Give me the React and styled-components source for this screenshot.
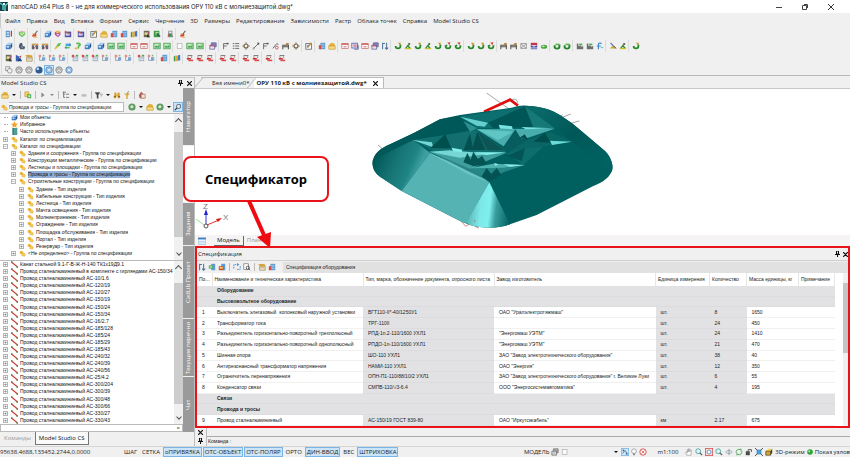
import React, { useState } from "react"
import styled, { createGlobalStyle, css } from "styled-components"

/* small toolbar drawings, all on a 10x10 field */
const glyphs = {
  table: (
    <>
      <rect x="1" y="1" width="5" height="8" fill="#4a90d0" />
      <path d="M2 3h3M2 5h3M2 7h3" stroke="#fff" />
      <path d="M8 1v7" stroke="#c33" strokeWidth="1.5" />
    </>
  ),
  shield: (
    <>
      <path d="M1 2l4 1 4-1v4L5 9 1 6z" fill="#6fc175" />
      <path d="M3 4l2 2 3-3" stroke="#e9f08a" strokeWidth="1.4" fill="none" />
      <path d="M2 2l3-1 3 1z" fill="#d66" />
    </>
  ),
  brush: (
    <>
      <path d="M8 1L5 5" stroke="#555" strokeWidth="1.3" />
      <path d="M1 8c2-4 4-4 6-2l-1 2z" fill="#d3452e" />
      <path d="M1 5l3-1 1 2z" fill="#e2a33a" />
      <path d="M3 9h5" stroke="#e2a33a" strokeWidth="1" />
    </>
  ),
  cube: (
    <>
      <path d="M1 4l3-3h5l-2 3z" fill="#a7cdf0" />
      <path d="M1 4h6v5H1z" fill="#3b7dc4" />
      <path d="M7 4l2-3v5L7 9z" fill="#23548c" />
      <path d="M2 5h3v2H2z" fill="#cfe4f7" />
    </>
  ),
  heart: (
    <>
      <path d="M1 2l3 2 4-2v4L5 9 1 6z" fill="#b04da0" />
      <path d="M2 1h5v3H3z" fill="#e8b54a" />
      <path d="M3 5h3v2H4z" fill="#e9d6f4" />
    </>
  ),
  screen: (
    <>
      <rect x="1" y="2" width="8" height="7" fill="#5551a8" />
      <rect x="2" y="4" width="5" height="3" fill="#d8d5f5" />
      <path d="M1 1l5 4" stroke="#d2643c" strokeWidth="1.3" />
    </>
  ),
  edit: (
    <>
      <rect x="1" y="2" width="7" height="7" fill="#fff" stroke="#666" />
      <path d="M3 7l5-6" stroke="#c58a2a" strokeWidth="1.7" />
      <path d="M2 4h3M2 6h2" stroke="#4a7cb5" />
    </>
  ),
  folder: (
    <>
      <path d="M1 4l3-3 4 1 1 3v4H1z" fill="#e4b23c" />
      <path d="M1 5h8v4H1z" fill="#f6d983" stroke="#b98a24" strokeWidth=".6" />
    </>
  ),
  chart: (
    <>
      <rect x="3" y="1" width="6" height="8" fill="#5b9bd5" />
      <path d="M4 3h4M4 5h4M4 7h4" stroke="#b9d6f0" strokeWidth=".8" />
      <path d="M1 4h3v5H1z" fill="#d24c43" />
    </>
  ),
  books: (
    <>
      <path d="M1 3l2-1v7H1z" fill="#3f9c4d" />
      <path d="M3 2h3v7H3z" fill="#f0a52c" />
      <path d="M6 2l3-1v7H6z" fill="#3a7cc5" />
    </>
  ),
  photo: (
    <>
      <rect x="1" y="1" width="7" height="8" fill="#6b6a4e" />
      <path d="M2 3h4v3H2z" fill="#e9dc9a" />
      <path d="M5 5l4 4H5z" fill="#333" />
      <path d="M6 2h2v2H6z" fill="#bb4fa8" />
    </>
  ),
  greenbook: (
    <>
      <rect x="1" y="1" width="7" height="8" fill="#3d9b46" />
      <path d="M3 3h4M3 5h2" stroke="#dff3c8" />
      <path d="M5 5l4 3" stroke="#345" strokeWidth="1.5" />
    </>
  ),
  addbook: (
    <>
      <path d="M1 1h5v6H1z" fill="#f0cf5c" stroke="#b58a24" strokeWidth=".6" />
      <path d="M4 4h5v5H4z" fill="#4fae55" />
      <path d="M5 6.500h3M6.500 5v3" stroke="#fff" strokeWidth=".8" />
    </>
  ),
  flask: (
    <>
      <path d="M3 1h5v4l1 4H2z" fill="#8a8f98" />
      <path d="M3 5h2v3H3z" fill="#d2483d" />
      <path d="M5 5h2v3H5z" fill="#3aa04d" />
      <path d="M4 2h3v2H4z" fill="#eee" />
    </>
  ),
  bell: (
    <>
      <path d="M2 2l3-1 1 4 3 1-1 3H3L1 6z" fill="#4e5c6e" />
      <path d="M4 5l2 1-1 2z" fill="#9fb9d8" />
    </>
  ),
  crowd: (
    <>
      <path d="M1 2h8v2H1z" fill="#c9a14c" />
      <path d="M1 4h3v5H1zM6 4h3v5H6z" fill="#5b6472" />
      <path d="M3 9l4-5" stroke="#c44" />
    </>
  ),
  pen: (
    <>
      <path d="M1 8l4-6 4-1-2 4z" fill="#5cbf45" />
      <path d="M1 9l4-4" stroke="#e5c62f" strokeWidth="1.6" />
    </>
  ),
  swap: (
    <>
      <path d="M2 2h6v3H2z" fill="#46a8d8" />
      <path d="M1 6h6v2H1z" fill="#5cc24f" />
      <path d="M7 1l2 3-2 2zM3 5L1 7l2 2z" fill="#3b87ba" />
    </>
  ),
  hook: (
    <>
      <path d="M3 2c5-1 6 2 3 3l-1 3" stroke="#5bb74b" strokeWidth="2" fill="none" />
      <path d="M1 7h3v2H1z" fill="#e2b33b" />
    </>
  ),
  picture: (
    <>
      <rect x="1" y="1.5" width="8" height="7" fill="#b7e3a3" stroke="#48a05b" />
      <path d="M2 7l2-3 2 2 2-3v4z" fill="#379b62" />
      <path d="M3 3h2v1H3z" fill="#fff" />
    </>
  ),
  redwin: (
    <>
      <rect x="1" y="2" width="8" height="6" fill="#fff" stroke="#c77a76" />
      <path d="M1 2h8v1.500H1z" fill="#c9544d" />
      <path d="M3 6h4" stroke="#a55" />
    </>
  ),
  bluewin: (
    <>
      <rect x="1" y="1.5" width="7" height="6" fill="#f4e4ec" stroke="#4a62a8" />
      <path d="M3 3h4v3H3z" fill="#d08a9c" />
      <path d="M4 9h5V4" stroke="#445a9c" fill="none" />
    </>
  ),
  snap: (
    <>
      <rect x="0.500" y="0.500" width="9" height="9" fill="#d5e8f8" stroke="#7ab5e5" />
      <path d="M2 7l3-4 3 5" stroke="#3f6da0" fill="none" />
      <path d="M2 2h2v2H2zM6 6h2v2H6z" fill="#3f6da0" />
    </>
  ),
  stack: (
    <>
      <path d="M3 1h6v5H3z" fill="#8c84c4" stroke="#444f8a" strokeWidth=".8" />
      <path d="M1 4h6v5H1z" fill="#e6dff4" stroke="#444f8a" strokeWidth=".8" />
      <path d="M1 4h6v1.500H1z" fill="#b95563" />
    </>
  ),
  greystack: (
    <>
      <path d="M3 1h6v5H3z" fill="#aaa" stroke="#666" strokeWidth=".8" />
      <path d="M1 4h6v5H1z" fill="#ccc" stroke="#666" strokeWidth=".8" />
    </>
  ),
  blank: <rect x="1.500" y="2" width="6" height="6" fill="#fafafa" stroke="#aaa" strokeWidth=".8" />,
  node: (
    <>
      <path d="M2 9V2h6M2 5h4" stroke="#6d6d6d" strokeWidth="1.200" fill="none" />
      <path d="M6 1h2v2H6z" fill="#4b4b4b" />
    </>
  ),
  lines: (
    <path d="M1 2h2M4 2h5M1 5h2M4 5h5M1 8h2M4 8h5" stroke="#6b6b6b" strokeWidth="1.200" />
  ),
  gear: (
    <>
      <circle cx="5" cy="5" r="2.500" fill="none" stroke="#726249" strokeWidth="1.400" />
      <path d="M5 0v3M5 7v3M0 5h3M7 5h3" stroke="#927d5b" />
    </>
  ),
  slope: (
    <>
      <path d="M1 9l7-7" stroke="#6b6b6b" strokeWidth="1.200" />
      <path d="M6 1h3v3z" fill="#444" />
      <path d="M1 6v3h3z" fill="#999" />
    </>
  ),
  mark: (
    <>
      <path d="M1 8l5-6 2 1" stroke="#6b6b6b" strokeWidth="1.200" fill="none" />
      <circle cx="6" cy="7" r="1.800" fill="none" stroke="#c44" />
    </>
  ),
  greenj: (
    <>
      <path d="M8 3v2c0 4-6 4-6 0" stroke="#278a29" strokeWidth="2.200" fill="none" />
      <path d="M5 1l4 0-2 3z" fill="#c79a2c" />
    </>
  ),
  greenr: (
    <>
      <path d="M8 4v1c0 4-6 4-6 0l2-1" stroke="#278a29" strokeWidth="2.200" fill="none" />
      <path d="M4 1l4-1-1 4z" fill="#d55045" />
    </>
  ),
  greenx: (
    <>
      <path d="M2 8l5-6M4 4l4 4" stroke="#3b8b2c" strokeWidth="1.700" />
      <path d="M1 7.500h8V9H1z" fill="#c7c32c" />
      <path d="M5 1l3 1-1 2z" fill="#555" />
    </>
  ),
  gate: (
    <>
      <path d="M1 9V4h7v5M1 6h7" stroke="#55524c" strokeWidth="1.300" fill="none" />
      <path d="M4 4l2-3 3 1-2 3z" fill="#a9824b" />
    </>
  ),
  mesh: (
    <path d="M1 2l7 6M8 2L1 8M1 2h7v6H1z" stroke="#868686" strokeWidth=".9" fill="none" />
  ),
  redblue: (
    <>
      <path d="M1 1h8v3H1z" fill="#c2334d" />
      <path d="M1 4l4 2 4-2v3H1z" fill="#3c48a8" />
      <path d="M1 8h8v1H1z" fill="#3c48a8" />
    </>
  ),
  hill: (
    <>
      <path d="M1 1l4 2v6H1z" fill="#3c62b8" />
      <path d="M3 9l3-5 3 5z" fill="#27407c" />
      <path d="M5 3l3-1-1 3z" fill="#c2452d" />
    </>
  ),
  pond: (
    <>
      <ellipse cx="5" cy="6" rx="4" ry="2.500" fill="#49a63c" />
      <ellipse cx="4" cy="5.500" rx="2" ry="1" fill="#b8e2a7" />
    </>
  ),
  ring: (
    <>
      <path d="M2 4v2c0 3 6 3 6 0V3" stroke="#22852a" strokeWidth="2.400" fill="none" />
      <path d="M3 2h5v2H3z" fill="#5fb64c" />
    </>
  ),
  factory: (
    <>
      <path d="M1 9V2h2v3l3-1v2l3-1v4z" fill="#6b716c" />
      <path d="M4 2h4v2H4z" fill="#4faf57" />
    </>
  ),
  bluef: (
    <>
      <path d="M3 9V3c0-2 3-2 4-1M1 5h5" stroke="#3f8fd0" strokeWidth="1.500" fill="none" />
      <path d="M6 7h3" stroke="#4ab0a0" />
    </>
  ),
  cross: (
    <>
      <path d="M2 1l6 7" stroke="#4b77b9" strokeWidth="1.500" />
      <path d="M1 8l3-3 5 3z" fill="#c4b428" />
      <path d="M6 5l3 3" stroke="#a33" />
    </>
  ),
  redtree: (
    <>
      <path d="M2 2v6h6" stroke="#7f95ad" fill="none" />
      <path d="M1 1h3v3H1z" fill="#e08b85" />
      <path d="M5 4h4v4H5z" fill="#7ba6d0" />
      <path d="M6 1h2v2H6z" fill="#7cb884" />
    </>
  ),
  tablered: (
    <>
      <path d="M2 3h7v6H2z" fill="#a9b7c8" />
      <path d="M3 5h5M3 7h5" stroke="#fff" strokeWidth=".8" />
      <path d="M1 1h3v3H1z" fill="#d4504e" />
      <path d="M6 1h3v2H6z" fill="#53a560" />
    </>
  ),
  pdf: (
    <>
      <path d="M2 2h6" stroke="#777" strokeWidth="1.300" />
      <path d="M2 3l1 2M7 3v2" stroke="#a66" />
      <path d="M1 5h5v2H1z" fill="#cf2a2e" />
      <path d="M3 7h6v2H3z" fill="#dd4a4c" />
    </>
  ),
  copy: (
    <>
      <rect x="1" y="1" width="5" height="5" fill="none" stroke="#777" strokeWidth=".8" />
      <circle cx="6" cy="6" r="3" fill="#eee" stroke="#777" strokeWidth=".8" />
    </>
  ),
  sphere: (
    <>
      <circle cx="5" cy="5" r="4" fill="#e8e8e8" stroke="#777" />
      <circle cx="5" cy="5" r="2" fill="none" stroke="#999" strokeWidth=".8" />
      <path d="M1 4h8M5 1v2" stroke="#888" strokeWidth=".5" />
    </>
  ),
  ball: (
    <>
      <circle cx="5" cy="5" r="4.500" fill="#2c5c92" />
      <circle cx="3.500" cy="3.500" r="1.700" fill="#c4ddf5" />
    </>
  ),
  bluesphere: (
    <>
      <circle cx="5" cy="5" r="4" fill="#a9cbee" stroke="#4c7fae" />
      <circle cx="5" cy="5" r="2" fill="#e2effb" stroke="#7ba7cf" strokeWidth=".6" />
    </>
  ),
  play: <path d="M3 2l4 3-4 3z" fill="#888" />,
  tree: <path d="M2 1v7h2M2 4h2M5 4h4M5 8h4M1 1.500h4" stroke="#666" fill="none" />,
  minus: <path d="M2 4h6v3H2z" fill="#bbb" />,
  funnel: <path d="M0 2h6L4 5v4H2.500V5zM6 4h4M7 6h2" fill="#444" stroke="#555" strokeWidth=".6" />,
  binocular: (
    <>
      <path d="M1 9l1-7h2l.5 3h1L6 2h2l1 7H6V6H4v3z" fill="#d39b2c" />
      <path d="M1 7h3M6 7h3" stroke="#7b5413" />
    </>
  ),
  goldfunnel: (
    <>
      <path d="M1 3h8L6 6v4H4V6z" fill="#e0b23d" />
      <path d="M7 0L5 4" stroke="#777" />
    </>
  ),
  home: (
    <>
      <path d="M1 5l3-4 4 4v4H2z" fill="#b65b5b" />
      <path d="M4 4h5v5H4z" fill="#f1e7d0" stroke="#a4615f" strokeWidth=".8" />
    </>
  ),
  green: (
    <>
      <circle cx="5" cy="5" r="4.500" fill="#5f9a62" />
      <path d="M3 4c1-2 4-1 4 1L5 7 3 6" fill="#d7edc8" />
    </>
  ),
  wrench: (
    <>
      <path d="M1 9l4-4" stroke="#333" strokeWidth="1.500" />
      <path d="M4 2h4v4l-3 1-2-2z" fill="#e8f2fa" stroke="#456" />
    </>
  ),
  star: <path d="M5 0l1.500 3.500L10 4 7.500 6.300 8 10 5 8 2 10l.5-3.700L0 4l3.500-.5z" fill="#efa32d" />,
  item: (
    <>
      <path d="M1 2l3-1 2 2-1 3-4-1z" fill="#eeb52c" />
      <path d="M4 5l3-1 2 2-1 3-4-1z" fill="#f5cf59" stroke="#c48e20" strokeWidth=".5" />
    </>
  ),
  wire: (
    <>
      <path d="M0 1l10 8" stroke="#d1342f" strokeWidth="1.600" />
      <path d="M0 0l3 2M7 8l3 2" stroke="#588b49" strokeWidth="1.200" />
    </>
  ),
  notebook: (
    <>
      <rect x="2" y="0" width="7" height="10" fill="#4f9c98" />
      <path d="M3 0v10" stroke="#25615e" />
    </>
  ),
  sheet: (
    <>
      <rect x="0" y="1" width="10" height="8" fill="#e8f1fa" stroke="#8ba9c6" strokeWidth=".8" />
      <path d="M0 2h10" stroke="#3a7fc4" strokeWidth="2" />
      <path d="M0 6h10" stroke="#a9c4de" />
    </>
  ),
  sort: <path d="M2 1v8M7 1v8M5 2h-3M9 7L7 9 5 7" stroke="#52749b" strokeWidth="1.300" fill="none" />,
  sheetgreen: (
    <>
      <rect x="4" y="1" width="5" height="8" fill="#5b9bd5" />
      <path d="M1 3h5v4H1z" fill="#4fae55" />
      <path d="M2 5h3" stroke="#fff" />
    </>
  ),
  sheetgold: (
    <>
      <rect x="4" y="1" width="5" height="8" fill="#5b9bd5" />
      <path d="M1 4h6v5H1z" fill="#c9542c" />
      <path d="M2 5h4v2H2z" fill="#f3cf68" />
    </>
  ),
  arrows: (
    <>
      <path d="M1 7V2h4M9 4v4H4" stroke="#4a8fd0" strokeWidth="1.200" strokeDasharray="2 1" fill="none" />
      <path d="M5 0l3 2-3 2z" fill="#4a8fd0" />
    </>
  ),
  find: (
    <>
      <rect x="1" y="1" width="6" height="7" fill="#fff" stroke="#666" strokeWidth=".8" />
      <circle cx="6" cy="6" r="2" fill="none" stroke="#444" />
      <path d="M7 7l2 2" stroke="#444" />
    </>
  ),
  props: (
    <>
      <path d="M2 4h7v5H2z" fill="#f6e9c0" stroke="#8f8050" strokeWidth=".8" />
      <path d="M0 2l4-1 5 1v2H3z" fill="#d79f35" />
      <path d="M3 6h5" stroke="#999" />
    </>
  ),
  bulb: (
    <>
      <circle cx="5" cy="4" r="3" fill="#fafafa" stroke="#999" />
      <path d="M4 8h2" stroke="#777" strokeWidth="2" />
    </>
  ),
  target: (
    <>
      <circle cx="5" cy="5" r="4" fill="#fff" stroke="#d95454" strokeWidth="1.200" />
      <path d="M3 3l4 4M7 3L3 7" stroke="#d95454" />
    </>
  ),
  hand: <path d="M2 9L1 5l1-.5L3 6V2l1-.5V5l.5-4h1L6 5l1-3 1 .5L7.500 9z" fill="#fff" stroke="#777" strokeWidth=".6" />,
  lens: (
    <>
      <circle cx="4" cy="4" r="3" fill="#e4f6f4" stroke="#3e98a0" />
      <path d="M6 6l3 3" stroke="#555" strokeWidth="1.400" />
    </>
  ),
  lensred: (
    <>
      <rect x="0.500" y="0.500" width="9" height="9" fill="#f6dede" stroke="#d95454" />
      <circle cx="5" cy="5" r="2.500" fill="#fff" stroke="#4a86c0" />
    </>
  ),
  orbit: (
    <>
      <ellipse cx="5" cy="5" rx="4" ry="1.800" fill="none" stroke="#7893ad" strokeWidth=".8" />
      <path d="M5 1v8" stroke="#777" strokeWidth=".8" />
    </>
  ),
  recycle: <path d="M1.500 6a3.500 3.500 0 0 1 5-4l1-1v3M8.500 4a3.500 3.500 0 0 1-5 4l-1 1V6" stroke="#3f9f4a" fill="none" strokeWidth="1.100" />,
  lock: (
    <>
      <path d="M1 4h5v5H1z" fill="#4a4a4a" />
      <path d="M4 4V2h4v3" stroke="#555" strokeWidth="1.200" fill="none" />
    </>
  ),
  frame: (
    <>
      <rect x="2" y="2" width="6" height="6" fill="#4b9bd8" />
      <path d="M0 0l3 3M10 0L7 3M0 10l3-3M10 10L7 7" stroke="#333" />
    </>
  ),
  box3d: (
    <>
      <path d="M1 4l3-3h5L7 4z" fill="#f3d060" />
      <path d="M1 4h6v5H1z" fill="#dba52a" stroke="#333" strokeWidth=".8" />
      <path d="M7 4l2-3v5L7 9z" fill="#4a3a12" />
    </>
  ),
  dot: (
    <>
      <circle cx="5" cy="5" r="3.500" fill="#2fa437" />
      <circle cx="4" cy="4" r="1.200" fill="#b5edb0" />
    </>
  ),
}

const Glyph = ({ name, size = 8 }) => (
  <svg width={size} height={size} viewBox="0 0 10 10" aria-hidden="true">
    {glyphs[name]}
  </svg>
)

/* toolbars: groups are split by "|" */
const standardBars = [
  "table|shield|brush|cube heart screen|screen|edit folder chart chart books|photo greenbook|flask|brush",
  "cube|bell|crowd crowd|pen swap hook cube|cube picture picture|redwin redwin|picture picture|blank picture picture|stack|node lines gear slope node mark gate gear|edit|chart folder|redwin bluewin redwin stack sort|greenj greenx greenj greenx greenj greenr greenr|greenj greenj greenr|gate gate mesh redblue pond|ring ring|factory factory bluef|cross greenx|greenj",
  "photo hill props|redtree redtree redtree|tablered tablered tablered redtree|redtree redtree|tablered redtree|chart|books|pdf pdf pdf|pdf pdf|pdf pdf|pdf|pdf",
  "copy sphere sphere ball bluesphere sphere bluesphere",
].map(row => row.split("|").map(group => group.split(" ")))

const menuItems = [
  "Файл",
  "Правка",
  "Вид",
  "Вставка",
  "Формат",
  "Сервис",
  "Черчение",
  "3D",
  "Размеры",
  "Редактирование",
  "Зависимости",
  "Растр",
  "Облака точек",
  "Справка",
  "Model Studio CS",
]

const catalog = [
  { text: "Мои объекты", icon: "cube", level: 0, leaf: true },
  { text: "Избранное", icon: "star", level: 0, leaf: true },
  { text: "Часто используемые объекты", icon: "notebook", level: 0, leaf: true },
  { text: "Каталог по специализации", level: 0 },
  { text: "Каталог по спецификации", level: 0, open: true },
  { text: "Здания и сооружения - Группа по спецификации", level: 1 },
  { text: "Конструкции металлические - Группа по спецификации", level: 1 },
  { text: "Лестницы и площадки - Группа по спецификации", level: 1 },
  { text: "Провода и тросы - Группа по спецификации", level: 1, selected: true },
  { text: "Строительные конструкции - Группа по спецификации", level: 1, open: true },
  { text: "Здание - Тип изделия", level: 2 },
  { text: "Кабельные конструкции - Тип изделия", level: 2 },
  { text: "Лестница - Тип изделия", level: 2 },
  { text: "Мачта освещения - Тип изделия", level: 2 },
  { text: "Молниеприемник - Тип изделия", level: 2 },
  { text: "Ограждение - Тип изделия", level: 2 },
  { text: "Площадка обслуживания - Тип изделия", level: 2 },
  { text: "Портал - Тип изделия", level: 2 },
  { text: "Резервуар - Тип изделия", level: 2 },
  { text: "<Не определено> - Группа по спецификации", level: 1 },
]

const wires = [
  "Канат стальной 9.1-Г-В-Ж-Н-140 ТК1х19Д9.1",
  "Провод сталеалюминиевый в комплекте с гирляндами АС-150/34",
  ...[
    "10/1.6",
    "120/19",
    "120/27",
    "150/19",
    "150/24",
    "150/34",
    "16/2.7",
    "185/128",
    "185/24",
    "185/29",
    "185/43",
    "240/32",
    "240/39",
    "240/56",
    "25/4.2",
    "300/204",
    "300/39",
    "300/48",
    "300/66",
    "330/27",
    "330/43",
  ].map(size => `Провод сталеалюминиевый АС-${size}`),
]

const sideTabs = [
  { text: "Навигатор", share: 57 },
  { text: "Я..", share: 56, active: true },
  { text: "Задания", share: 42 },
  { text: "CadLib Проект", share: 72 },
  { text: "Текущие перечни", share: 57 },
  { text: "Чат", share: 55 },
]

const columns = [
  "По...",
  "Наименование и техническая характеристика",
  "Тип, марка, обозначение документа, опросного листа",
  "Завод изготовитель",
  "Единица измерения",
  "Количество",
  "Масса единицы, кг",
  "Примечание",
]

const specRows = [
  { group: "Оборудование" },
  { group: "Высоковольтное оборудование" },
  { cells: ["1", "Выключатель элегазовый  колонковый наружной установки", "ВГТ110-II*-40/1250У1", "ОАО \"Уралэлектротяжмаш\"", "шт.", "8", "1650"] },
  { cells: ["2", "Трансформатор тока", "ТРГ-110II", "", "шт.", "24", "450"] },
  { cells: ["3", "Разъединитель горизонтально-поворотный трехполюсный", "РПД-1п.2-110/1600 УХЛ1", "\"Энергомаш УЭТМ\"", "шт.", "24", "1410"] },
  { cells: ["4", "Разъединитель горизонтально-поворотный однополюсный", "РПДО-1п-110/1600 УХЛ1", "\"Энергомаш УЭТМ\"", "шт.", "21", "470"] },
  { cells: ["5", "Шинная опора", "ШО-110 УХЛ1", "ЗАО \"Завод электротехнического оборудования\"", "шт.", "38", "40"] },
  { cells: ["6", "Антирезонансный трансформатор напряжения", "НАМИ-110 УХЛ1", "ОАО \"Энергия\"", "шт.", "12", "350"] },
  { cells: ["7", "Ограничитель перенапряжения", "ОПН-П1-110/88/10/2 УХЛ1", "ЗАО \"Завод электротехнического оборудования\" г. Великие Луки", "шт.", "6", "55"] },
  { cells: ["8", "Конденсатор связи", "СМПВ-110/√3-6.4", "ООО \"Энергосистемавтоматика\"", "шт.", "4", "195"] },
  { group: "Связи" },
  { group: "Провода и тросы" },
  { cells: ["9", "Провод сталеалюминиевый", "АС-150/19 ГОСТ 839-80", "ОАО \"Иркутсккабель\"", "км", "2.17", "675"] },
]

const Scene = () => (
  <SceneSvg viewBox="0 0 655 146" preserveAspectRatio="xMinYMin meet">
    <defs>
      <linearGradient id="cone" gradientUnits="userSpaceOnUse" x1="318" y1="400" x2="450" y2="415">
        <stop offset="0" stopColor="#55b3b3" />
        <stop offset=".3" stopColor="#7de8e8" />
        <stop offset=".5" stopColor="#7ff0ee" />
        <stop offset=".65" stopColor="#3a9d9d" />
        <stop offset="1" stopColor="#006060" />
      </linearGradient>
      <linearGradient id="left" gradientUnits="userSpaceOnUse" x1="50" y1="225" x2="165" y2="275">
        <stop offset="0" stopColor="#005a5a" />
        <stop offset=".35" stopColor="#147070" />
        <stop offset=".8" stopColor="#1f8484" />
        <stop offset="1" stopColor="#3f9f9f" />
      </linearGradient>
      <linearGradient id="right" gradientUnits="userSpaceOnUse" x1="520" y1="80" x2="720" y2="260">
        <stop offset="0" stopColor="#0a6969" />
        <stop offset=".5" stopColor="#005858" />
        <stop offset="1" stopColor="#006262" />
      </linearGradient>
    </defs>
    <g transform="translate(165 -4) scale(.33333)">
      <path d="M380 24l70 50M600 100l32-13M620 118l38-10M590 105l18-16M54 180l14 12" stroke="#777" strokeWidth="2" fill="none" />
      <path d="M372 80l78-36 24 18" stroke="#e01010" strokeWidth="8" fill="none" />
      <path d="M455 45q15-8 18 8" stroke="#777" strokeWidth="2" fill="none" />
      <path
        d="M38 232C40 205 62 190 90 178L160 145 240 103 300 90 455 68Q480 60 500 62C560 65 590 82 610 97L640 118 735 198C755 218 762 245 755 260 745 280 730 290 700 303L530 390 450 418C420 430 370 432 330 420L300 408 125 318 60 275C42 262 36 245 38 232z"
        fill="#006060"
      />
      <path d="M495 62C560 65 590 82 610 97L640 118 735 198C755 218 762 245 755 260L635 170z" fill="url(#right)" />
      <path d="M160 145L240 103 300 92 330 135 160 165 40 225C45 205 62 190 90 178z" fill="#005858" />
      <path d="M160 165L210 203 125 318 60 275C42 262 36 245 38 225z" fill="url(#left)" />
      <path d="M210 203L388 292 318 415 300 408 125 318z" fill="#55b3b3" />
      <path d="M388 292L318 413 330 420C370 432 420 430 450 418z" fill="url(#cone)" />
      <path d="M300 95L495 64 584 130 352 130z" fill="#0d6f6f" />
      <path d="M384 113L495 64 520 127 400 130z" fill="#005656" />
      <path d="M495 64L584 130 520 127z" fill="#177878" />
      <path d="M160 165L350 135 440 200 230 203z" fill="#126f6f" />
      <path d="M310 108L352 130 330 140z" fill="#2d8f8f" />
      <path d="M300 95L384 113 374 125 350 122z" fill="#64cfcc" />
      <path d="M350 133L584 131 500 160 440 190z" fill="#4aadad" />
      <path d="M350 133L460 140 415 165z" fill="#5fc6c4" />
      <path d="M416 119l40 5 2 8-38-1zM484 126l100 4-86 3z" fill="#77e4e1" />
      <path d="M430 185l36-52 18 30 10-16 16 28-70 25z" fill="#075d5d" />
      <path d="M480 160l12-8 10 12" stroke="#034848" strokeWidth="4" fill="none" />
      <path d="M500 165L570 140 636 170 440 205z" fill="#0a6565" />
      <path d="M520 170l34-27 18 30z" fill="#004d4d" />
      <path d="M570 167l66 3-60 10z" fill="#6cdcda" />
      <path d="M158 165l58 7 3 15z" fill="#70d8d5" />
      <path d="M210 190l46-42 18 42z" fill="#004f4f" />
      <path d="M310 196l20-50 8 40 14-46 25 55z" fill="#064f50" />
      <path d="M352 138l80 58-50 0z" fill="#0d5454" />
      <path d="M208 200L440 203 380 228 330 255z" fill="#3f9f9f" />
      <path d="M208 200l60-4 120 10-90 12z" fill="#76d6d4" />
      <path d="M275 188l32 6-2 8-26-4zM340 202l100 0-60 8z" fill="#83eeea" />
      <path d="M310 232l12-28 10 20 8-24 14 22 12-10 15 24-40 8z" fill="#055353" />
      <path d="M440 205l60-15 50-5-60 55z" fill="#0d6d6d" />
      <path d="M440 212l55-22-10 38z" fill="#035454" />
      <path d="M330 250L494 240 430 262 388 292z" fill="#268787" />
      <path d="M330 250l70-14 94 4-65 8z" fill="#4eb2af" />
      <path d="M430 238l64 2-44 5zM402 234l14 4-10 4z" fill="#8af0ed" />
      <path d="M364 275l16-26 14 18 16-18 14 20-36 23z" fill="#045353" />
      <path d="M205 203l130 52 53 37-60-22z" fill="#69c5c3" />
      <path d="M215 203l118 50 50 34-55-27z" fill="#2a8383" />
      <path d="M305 410l12 14 10-6M344 405v6M345 424l12 5" stroke="#a55" strokeWidth="2" fill="none" />
    </g>
    <g fill="none" strokeWidth="1">
      <path d="M11 135V124" stroke="#3333e0" strokeWidth="1" />
      <path d="M11 120l2 6H9z" fill="#2222d8" />
      <path d="M12 136l12-5" stroke="#e03333" />
      <path d="M27 129l-6 1 2 3z" fill="#d81818" />
      <path d="M9 136l-8-6" stroke="#8fe08f" />
      <circle cx="11" cy="137" r="2" stroke="#555" />
    </g>
    <AxisName x="8" y="120">Z</AxisName>
    <AxisName x="28" y="131">X</AxisName>
  </SceneSvg>
)

const App = () => {
  const [spec, setSpec] = useState("Спецификация оборудования")
  const [group, setGroup] = useState("Провода и тросы - Группа по спецификации")
  const [command, setCommand] = useState("")

  return (
    <Page>
      <GlobalStyle />
      <TitleBar>
        <Logo width="8" height="9" viewBox="0 0 8 9">
          <path d="M0 0h8v9H0z" fill="#163f47" />
          <path d="M0 1l3 2v5M8 1L5 4v5" stroke="#5fd4c9" strokeWidth="1.400" fill="none" />
          <path d="M3 1h2v2H3z" fill="#e7f6f5" />
        </Logo>
        <Title>nanoCAD x64 Plus 8 - не для коммерческого использования ОРУ 110 кВ с молниезащитой.dwg*</Title>
        <WindowButton aria-label="Свернуть">
          <svg width="6" height="6"><path d="M0 3.500h6" stroke="#444" /></svg>
        </WindowButton>
        <WindowButton aria-label="Развернуть">
          <svg width="6" height="6"><path d="M.5 1.500h4v4h-4zM2 .5h3.500V4" stroke="#444" fill="none" /></svg>
        </WindowButton>
        <WindowButton aria-label="Закрыть">
          <svg width="6" height="6"><path d="M0 0l6 6M6 0L0 6" stroke="#333" /></svg>
        </WindowButton>
      </TitleBar>
      <MenuBar>
        {menuItems.map(item => (
          <MenuItem key={item}>{item}</MenuItem>
        ))}
      </MenuBar>
      <Toolbars>
        {standardBars.map((row, r) => (
          <ToolRow key={`bar_${r}`}>
            {row.map((icons, g) => (
              <ToolGroup key={`group_${g}`}>
                {icons.map((icon, i) => (
                  <ToolButton key={`tool_${i}`} aria-label={icon} $active={r === 3 && i === 4}>
                    <Glyph name={icon} />
                  </ToolButton>
                ))}
              </ToolGroup>
            ))}
          </ToolRow>
        ))}
      </Toolbars>

      <Workspace>
        <SidePanel>
          <PanelHead>
            <PanelTitle>Model Studio CS</PanelTitle>
            <Pin />
            <Cross />
          </PanelHead>
          <SideBody>
            <SideMain>
              <PanelTools>
                <ToolButton aria-label="Открыть"><Glyph name="folder" /></ToolButton>
                <Caret />
                <Divider />
                <ToolButton aria-label="Добавить"><Glyph name="addbook" /></ToolButton>
                <Divider />
                <ToolButton aria-label="Пуск"><Glyph name="play" /></ToolButton>
                <Caret $pale />
                <Divider />
                <ToolButton aria-label="Дерево"><Glyph name="tree" /></ToolButton>
                <Caret />
                <ToolButton aria-label="Скрыть"><Glyph name="minus" /></ToolButton>
                <Divider />
                <ToolButton aria-label="Фильтр"><Glyph name="funnel" /></ToolButton>
                <Caret />
                <ToolButton aria-label="Поиск"><Glyph name="binocular" /></ToolButton>
                <ToolButton aria-label="Отбор"><Glyph name="goldfunnel" /></ToolButton>
                <Divider />
                <ToolButton aria-label="Домой"><Glyph name="home" /></ToolButton>
              </PanelTools>
              <PathRow>
                <Glyph name="item" size={7} />
                <PathInput aria-label="Раздел" value={group} onChange={e => setGroup(e.target.value)} />
                <ToolButton aria-label="Назад"><Glyph name="green" /></ToolButton>
                <Caret />
                <ToolButton aria-label="Папка"><Glyph name="folder" /></ToolButton>
                <ToolButton aria-label="Вперед"><Glyph name="green" /></ToolButton>
                <Caret />
                <ToolButton aria-label="Настройка" $active><Glyph name="wrench" /></ToolButton>
              </PathRow>
              <TreeArea $share={147}>
                <Tree $bottom={3}>
                  {catalog.map(node => (
                    <TreeRow key={node.text} $level={node.level}>
                      {node.leaf ? <Branch /> : <Expander aria-label="Ветвь">{node.open ? "−" : "+"}</Expander>}
                      <Glyph name={node.icon || "item"} size={7} />
                      <TreeText $selected={node.selected}>{node.text}</TreeText>
                    </TreeRow>
                  ))}
                </Tree>
                <ScrollBar $top={8} $thumb={72}>
                  <ScrollDown />
                </ScrollBar>
              </TreeArea>
              <TreeArea $share={164}>
                <Tree $bottom={0}>
                  {wires.map(wire => (
                    <TreeRow key={wire} $level={0}>
                      <Expander aria-label="Ветвь">+</Expander>
                      <Glyph name="wire" size={7} />
                      <TreeText>{wire}</TreeText>
                    </TreeRow>
                  ))}
                </Tree>
                <ScrollBar $top={12} $thumb={74}>
                  <ScrollDown />
                </ScrollBar>
              </TreeArea>
              <BottomScroll>
                <span>×</span>
              </BottomScroll>
            </SideMain>
            <SideTabs>
              {sideTabs.map(tab => (
                <SideTab key={tab.text} $share={tab.share} $active={tab.active}>
                  {tab.text}
                </SideTab>
              ))}
            </SideTabs>
          </SideBody>
          <PanelTabs>
            <PanelTab>Команды</PanelTab>
            <PanelTab $active>Model Studio CS</PanelTab>
          </PanelTabs>
        </SidePanel>

        <Main>
          <DocTabs>
            <DocTab>Без имени0*</DocTab>
            <DocTab $active>
              ОРУ 110 кВ с молниезащитой.dwg*
              <Cross />
            </DocTab>
          </DocTabs>
          <Canvas>
            <Scene />
          </Canvas>
          <ModelTabs>
            <Glyph name="sheet" />
            <ModelTab $active>Модель</ModelTab>
            <ModelTab>План</ModelTab>
          </ModelTabs>

          <SpecPanel>
            <SpecHead>
              <PanelTitle>Спецификация</PanelTitle>
              <Pin />
              <Cross />
            </SpecHead>
            <SpecTools>
              {["sort", "sheetgreen", "sheetgold", "|", "arrows", "find", "|", "props", "chart"].map((icon, i) =>
                icon === "|" ? (
                  <Divider key={`spec_${i}`} />
                ) : (
                  <ToolButton key={`spec_${i}`} aria-label={icon}>
                    <Glyph name={icon} />
                  </ToolButton>
                )
              )}
              <SpecSelect aria-label="Вид спецификации" value={spec} onChange={e => setSpec(e.target.value)}>
                <option>Спецификация оборудования</option>
              </SpecSelect>
            </SpecTools>
            <TableArea>
              <TableBox>
                <Table>
                  <colgroup>
                    <Col $w={15} />
                    <Col $w={151} />
                    <Col $w={131} />
                    <Col />
                    <Col $w={54} />
                    <Col $w={37} />
                    <Col $w={52} />
                    <Col $w={36} />
                  </colgroup>
                  <thead>
                    <tr>
                      {columns.map(name => (
                        <HeadCell key={name}>{name}</HeadCell>
                      ))}
                    </tr>
                  </thead>
                  <tbody>
                    {specRows.map((row, r) => (
                      <tr key={`row_${r}`}>
                        {columns.map((name, c) => {
                          if (row.group) {
                            return (
                              <Cell key={name} $grey $bold>
                                {c === 1 ? row.group : ""}
                              </Cell>
                            )
                          }
                          return (
                            <Cell key={name} $grey={c === 2 || c === 4 || c === 5}>
                              {row.cells[c]}
                            </Cell>
                          )
                        })}
                      </tr>
                    ))}
                  </tbody>
                </Table>
              </TableBox>
              <SpecScroll />
            </TableArea>
          </SpecPanel>

          <CommandArea>
            <CommandSide>
              <Cross />
              <Pin />
            </CommandSide>
            <CommandMain>
              <CommandLog />
              <CommandLine>
                <label htmlFor="command">Команда :</label>
                <input id="command" value={command} onChange={e => setCommand(e.target.value)} />
              </CommandLine>
            </CommandMain>
          </CommandArea>

          <Callout>Спецификатор</Callout>
          <Arrow width="30" height="48" viewBox="0 0 30 48">
            <path d="M4 0l15 34" stroke="#ee0a10" strokeWidth="4" />
            <path d="M12 36l14-5-1 16z" fill="#ee0a10" />
          </Arrow>
        </Main>
      </Workspace>

      <StatusBar>
        <Coords>95638.4688,133452.2744,0.0000</Coords>
        <StatusButton>ШАГ</StatusButton>
        <StatusButton>СЕТКА</StatusButton>
        <StatusButton $on>оПРИВЯЗКА</StatusButton>
        <StatusButton $on>ОТС-ОБЪЕКТ</StatusButton>
        <StatusButton $on>ОТС-ПОЛЯР</StatusButton>
        <StatusButton>ОРТО</StatusButton>
        <StatusButton $on>ДИН-ВВОД</StatusButton>
        <StatusButton>ВЕС</StatusButton>
        <StatusButton $on>ШТРИХОВКА</StatusButton>
        <StatusRight>
          <ModelState>
            МОДЕЛЬ
            <Glyph name="greystack" />
            <Glyph name="blank" />
          </ModelState>
          <Caret />
          <Glyph name="snap" />
          <Glyph name="bulb" />
          <Glyph name="target" />
          <Scale>m1:100</Scale>
          <ViewTools>
            {["hand", "lens", "lensred", "lens", "orbit", "recycle", "lock", "frame", "box3d"].map((icon, i) => (
              <ToolButton key={`view_${i}`} aria-label={icon}>
                <Glyph name={icon} />
              </ToolButton>
            ))}
          </ViewTools>
          <span>3D-режим</span>
          <Glyph name="dot" />
          <span>Показ узлов</span>
        </StatusRight>
      </StatusBar>
    </Page>
  )
}

export default App

const GlobalStyle = createGlobalStyle`
  * {
    box-sizing: border-box;
  }
  body {
    margin: 0;
    overflow: hidden;
    background: #f0f0f0;
  }
  button, input, select {
    font: inherit;
    color: inherit;
    margin: 0;
    padding: 0;
    border: 0;
    background: none;
  }
  svg {
    display: block;
    flex: none;
  }
`

const uiFont = css`
  font-family: "Open Sans", "Noto Sans", sans-serif;
  font-size: 6px;
  line-height: 8px;
`

const denseFont = css`
  font-family: "Liberation Sans", Arial, sans-serif;
  font-size: 5px;
  line-height: 7px;
`

const Page = styled.div`
  ${uiFont}
  display: flex;
  flex-direction: column;
  height: 100vh;
  color: #222;
`

const TitleBar = styled.header`
  display: flex;
  align-items: center;
  height: 13px;
  background: #fff;
  padding-right: 6px;
`

const Logo = styled.svg`
  margin-right: 3px;
`

const Title = styled.span`
  flex: 1;
  font-family: Inter, "Open Sans", sans-serif;
  white-space: nowrap;
`

const WindowButton = styled.button`
  display: flex;
  justify-content: center;
  width: 26px;
`

const MenuBar = styled.nav`
  display: flex;
  align-items: center;
  gap: 6px;
  height: 15px;
  padding-left: 4px;
  border-left: 1px solid #ccc;
`

const MenuItem = styled.button`
  white-space: nowrap;
`

const Toolbars = styled.div`
  height: 48px;
  border-bottom: 1px solid #b8b8b8;
`

const ToolRow = styled.div`
  display: flex;
  height: 12px;
  padding-left: 1px;
`

const ToolGroup = styled.div`
  display: flex;
  align-items: center;
  padding-left: 2px;
  border-left: 1px solid #dcdcdc;
`

const ToolButton = styled.button`
  display: flex;
  align-items: center;
  justify-content: center;
  width: 10px;
  height: 10px;
  flex: none;
  background: ${({ $active }) => ($active ? "#cce4f7" : "transparent")};
  box-shadow: ${({ $active }) => ($active ? "inset 0 0 0 1px #7ab5e5" : "none")};
`

const Divider = styled.span`
  width: 1px;
  height: 8px;
  margin: 0 2px;
  background: #bbb;
`

const Caret = styled.span`
  margin: 0 2px;
  border: 2px solid transparent;
  border-top-color: ${({ $pale }) => ($pale ? "#888" : "#111")};
  border-bottom: 0;
`

const Workspace = styled.div`
  flex: 1;
  min-height: 0;
  display: flex;
  padding-top: 1px;
`

const SidePanel = styled.aside`
  width: 195px;
  flex: none;
  display: flex;
  flex-direction: column;
  border-right: 1px solid #bdbdbd;
`

const PanelHead = styled.div`
  display: flex;
  align-items: center;
  gap: 4px;
  height: 11px;
  padding-right: 2px;
  border-top: 1px solid #c4c4c4;
`

const PanelTitle = styled.span`
  flex: 1;
  padding-left: 1px;
`

const Pin = () => (
  <svg width="5" height="6" viewBox="0 0 5 6">
    <path d="M1.500 0h2v3h-2zM0 3.500h5M2.500 4v2" stroke="#111" fill="none" />
  </svg>
)

const Cross = () => (
  <svg width="5" height="5" viewBox="0 0 5 5">
    <path d="M0 0l5 5M5 0L0 5" stroke="#111" strokeWidth="1.200" />
  </svg>
)

const SideBody = styled.div`
  flex: 1;
  min-height: 0;
  display: flex;
`

const SideMain = styled.div`
  flex: 1;
  min-width: 0;
  display: flex;
  flex-direction: column;
`

const PanelTools = styled.div`
  display: flex;
  align-items: center;
  height: 13px;
`

const PathRow = styled.div`
  ${denseFont}
  display: flex;
  align-items: center;
  height: 12px;
  padding-left: 1px;
`

const PathInput = styled.input`
  flex: 1;
  min-width: 0;
  height: 10px;
  margin: 0 3px 0 1px;
  border: solid #bbb;
  border-width: 1px 1px 1px 0;
  background: #fff;
`

const TreeArea = styled.div`
  flex: ${({ $share }) => $share} 1 0;
  min-height: 0;
  display: flex;
  background: #fff;
  border-top: 1px solid #bbb;
`

const Tree = styled.ul`
  ${denseFont}
  flex: 1;
  min-width: 0;
  display: flex;
  flex-direction: column;
  list-style: none;
  margin: 0;
  padding: 0 0 ${({ $bottom }) => $bottom}px;
  color: #111;
`

const TreeRow = styled.li`
  flex: 1;
  min-height: 0;
  display: flex;
  align-items: center;
  gap: 2px;
  padding-left: ${({ $level }) => 3 + $level * 8}px;
  white-space: nowrap;
`

const Expander = styled.button`
  display: flex;
  align-items: center;
  justify-content: center;
  width: 5px;
  height: 5px;
  margin-right: 1px;
  border: 1px solid #b5b5b5;
  line-height: 5px;
  color: #555;
`

const Branch = styled.span`
  width: 4px;
  margin: 0 1px;
  border-top: 1px dotted #aaa;
`

const TreeText = styled.span`
  background: ${({ $selected }) => ($selected ? "#94b0d8" : "transparent")};
`

const ScrollBar = styled.div`
  width: 9px;
  flex: none;
  display: flex;
  flex-direction: column;
  align-items: center;
  background: #f0f0f0;

  &::before {
    content: "";
    width: 4px;
    height: 4px;
    margin-top: 5px;
    border: solid #555;
    border-width: 1px 0 0 1px;
    transform: rotate(45deg);
  }

  &::after {
    content: "";
    order: 1;
    width: 9px;
    height: ${({ $thumb }) => $thumb}%;
    margin-top: ${({ $top }) => $top}px;
    background: #cdcdcd;
  }
`

const ScrollDown = styled.span`
  order: 2;
  width: 4px;
  height: 4px;
  margin: auto 0 5px;
  border: solid #555;
  border-width: 0 1px 1px 0;
  transform: rotate(45deg);
`

const BottomScroll = styled.div`
  display: flex;
  align-items: center;
  justify-content: flex-end;
  height: 8px;
  padding-right: 2px;
  border: 1px solid #bbb;
  background: #fff;
`

const SideTabs = styled.div`
  width: 11px;
  display: flex;
  flex-direction: column;
  gap: 1px;
`

const SideTab = styled.button`
  flex: ${({ $share }) => $share} 1 0;
  min-height: 0;
  writing-mode: vertical-rl;
  transform: rotate(180deg);
  text-align: center;
  line-height: 9px;
  white-space: nowrap;
  color: ${({ $active }) => ($active ? "#222" : "#fff")};
  background: ${({ $active }) => ($active ? "#fff" : "#9a9a9a")};
`

const PanelTabs = styled.div`
  display: flex;
  height: 14px;
  padding-bottom: 1px;
`

const PanelTab = styled.button`
  padding: 0 3px;
  color: ${({ $active }) => ($active ? "#111" : "#999")};
  background: ${({ $active }) => ($active ? "#fafafa" : "transparent")};
  border: solid ${({ $active }) => ($active ? "#777" : "transparent")};
  border-width: 0 1px 1px;
  min-width: 34px;
`

const Main = styled.main`
  position: relative;
  flex: 1;
  min-width: 0;
  display: flex;
  flex-direction: column;
`

const DocTabs = styled.div`
  display: flex;
  height: 12px;
  padding-left: 6px;
  border-bottom: 1px solid #c9c9c9;
`

const DocTab = styled.button`
  position: relative;
  display: flex;
  align-items: center;
  gap: 6px;
  padding: 0 5px 0 ${({ $active }) => ($active ? 2 : 11)}px;
  white-space: nowrap;
  font-weight: ${({ $active }) => ($active ? 700 : 400)};
  background: ${({ $active }) => ($active ? "#fff" : "transparent")};
  border: solid #bbb;
  border-width: 1px ${({ $active }) => ($active ? 1 : 0)}px 0 0;

  &::before {
    content: "";
    position: absolute;
    left: -3px;
    top: 0;
    bottom: 0;
    border-left: 1px solid #bbb;
    transform: skewX(-40deg);
  }
`

const Canvas = styled.div`
  flex: 1;
  min-height: 0;
  overflow: hidden;
  background: #fff;
`

const SceneSvg = styled.svg`
  width: 100%;
  height: 100%;
`

const AxisName = styled.text`
  font-family: "Liberation Sans", sans-serif;
  font-size: 8px;
  fill: #777;
`

const ModelTabs = styled.div`
  display: flex;
  align-items: center;
  height: 11px;
  padding-left: 3px;
  background: #f5f3f3;
`

const ModelTab = styled.button`
  height: 10px;
  padding: 0 3px;
  color: ${({ $active }) => ($active ? "#111" : "#999")};
  border: solid ${({ $active }) => ($active ? "#666" : "transparent")};
  border-width: 0 1px 1px 0;

  &:nth-child(2) {
    margin-left: 8px;
  }
`

const SpecPanel = styled.section`
  height: 182px;
  flex: none;
  display: flex;
  flex-direction: column;
  border: 2px solid #e8141a;
  background: #f0f0f0;
`

const SpecHead = styled.div`
  display: flex;
  align-items: center;
  gap: 3px;
  height: 13px;
  border-bottom: 1px solid #cfcfcf;
`

const SpecTools = styled.div`
  display: flex;
  align-items: center;
  height: 12px;
`

const SpecSelect = styled.select`
  ${denseFont}
  appearance: none;
  flex: 1;
  height: 11px;
  margin-left: 6px;
  padding-left: 3px;
  background: #e1e1e1;
`

const TableArea = styled.div`
  flex: 1;
  min-height: 0;
  display: flex;
  background: #fff;
`

const TableBox = styled.div`
  flex: 1;
  min-width: 0;
`

const Table = styled.table`
  ${denseFont}
  width: 100%;
  height: 100%;
  table-layout: fixed;
  border-collapse: collapse;
  color: #222;
`

const Col = styled.col`
  width: ${({ $w }) => ($w ? `${$w}px` : "auto")};
`

const HeadCell = styled.th`
  height: 13px;
  padding: 0 0 0 2px;
  text-align: left;
  font-weight: 400;
  white-space: nowrap;
  border-right: 1px solid #e6e6e6;
`

const Cell = styled.td`
  padding: 0 0 0 5px;
  white-space: pre;
  font-weight: ${({ $bold }) => ($bold ? 700 : 400)};
  background: ${({ $grey }) => ($grey ? "#e2e2e4" : "#fff")};
  border-bottom: 1px solid ${({ $grey }) => ($grey ? "#dcdcde" : "#f0f0f0")};
`

const SpecScroll = styled.div`
  width: 5px;
  margin-left: 8px;
  background: linear-gradient(#f0f0f0 10px, #c4c4c4 10px, #c4c4c4 80px, #f0f0f0 80px);
`

const CommandArea = styled.div`
  display: flex;
  height: 18px;
`

const CommandSide = styled.div`
  display: flex;
  flex-direction: column;
  align-items: center;
  justify-content: space-evenly;
  width: 11px;
`

const CommandMain = styled.div`
  flex: 1;
  border-left: 1px solid #bbb;
`

const CommandLog = styled.div`
  height: 9px;
  border-bottom: 1px solid #aaa;
`

const CommandLine = styled.div`
  ${denseFont}
  display: flex;
  align-items: center;
  height: 8px;
  padding-left: 1px;

  input {
    flex: 1;
    min-width: 0;
  }
`

const Callout = styled.div`
  position: absolute;
  left: -12px;
  top: 79px;
  width: 146px;
  height: 46px;
  display: flex;
  align-items: center;
  justify-content: center;
  border: 2px solid #e8141a;
  border-radius: 8px;
  background: #fff;
  color: #000;
  font-family: "Open Sans", sans-serif;
  font-size: 13px;
  font-weight: 700;
`

const Arrow = styled.svg`
  position: absolute;
  left: 50px;
  top: 124px;
`

const StatusBar = styled.footer`
  display: flex;
  align-items: center;
  gap: 1px;
  height: 11px;
  border-top: 1px solid #d5d5d5;
  white-space: nowrap;
`

const Coords = styled.span`
  width: 121px;
`

const StatusButton = styled.button`
  height: 10px;
  padding: 0 1px;
  background: ${({ $on }) => ($on ? "#cce4f7" : "transparent")};
  border: 1px solid ${({ $on }) => ($on ? "#7ab5e5" : "transparent")};
`

const StatusRight = styled.div`
  display: flex;
  align-items: center;
  gap: 1px;
  margin-left: auto;
`

const ViewTools = styled.div`
  display: flex;
`

const ModelState = styled.span`
  display: flex;
  align-items: center;
  gap: 2px;
  margin-right: 42px;
`

const Scale = styled.span`
  margin: 0 5px 0 9px;
`
